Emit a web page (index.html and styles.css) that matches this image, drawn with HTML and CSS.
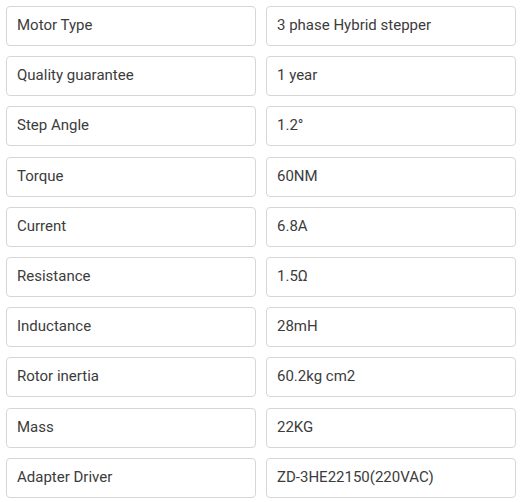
FILE: index.html
```html
<!DOCTYPE html>
<html>
<head>
<meta charset="utf-8">
<link rel="stylesheet" href="styles.css">
</head>
<body>
<div class="specs">
  <div class="cell">Motor Type</div><div class="cell">3 phase Hybrid stepper</div>
  <div class="cell">Quality guarantee</div><div class="cell">1 year</div>
  <div class="cell">Step Angle</div><div class="cell">1.2°</div>
  <div class="cell">Torque</div><div class="cell">60NM</div>
  <div class="cell">Current</div><div class="cell">6.8A</div>
  <div class="cell">Resistance</div><div class="cell">1.5Ω</div>
  <div class="cell">Inductance</div><div class="cell">28mH</div>
  <div class="cell">Rotor inertia</div><div class="cell">60.2kg cm2</div>
  <div class="cell">Mass</div><div class="cell">22KG</div>
  <div class="cell">Adapter Driver</div><div class="cell">ZD-3HE22150(220VAC)</div>
</div>
</body>
</html>
```
FILE: styles.css
```css
html, body {
  margin: 0;
  background: #fff;
}
body {
  padding: 6px;
  font-family: Roboto, "Liberation Sans", sans-serif;
  font-size: 15px;
  color: #3c3c3c;
}
.specs {
  display: grid;
  grid-template-columns: 250px 250px;
  column-gap: 10px;
  row-gap: 10.2px;
}
.cell {
  box-sizing: border-box;
  height: 40px;
  border: 1px solid #d6d6d6;
  border-radius: 4px;
  padding: 0 10px 2px;
  display: flex;
  align-items: center;
}
```
